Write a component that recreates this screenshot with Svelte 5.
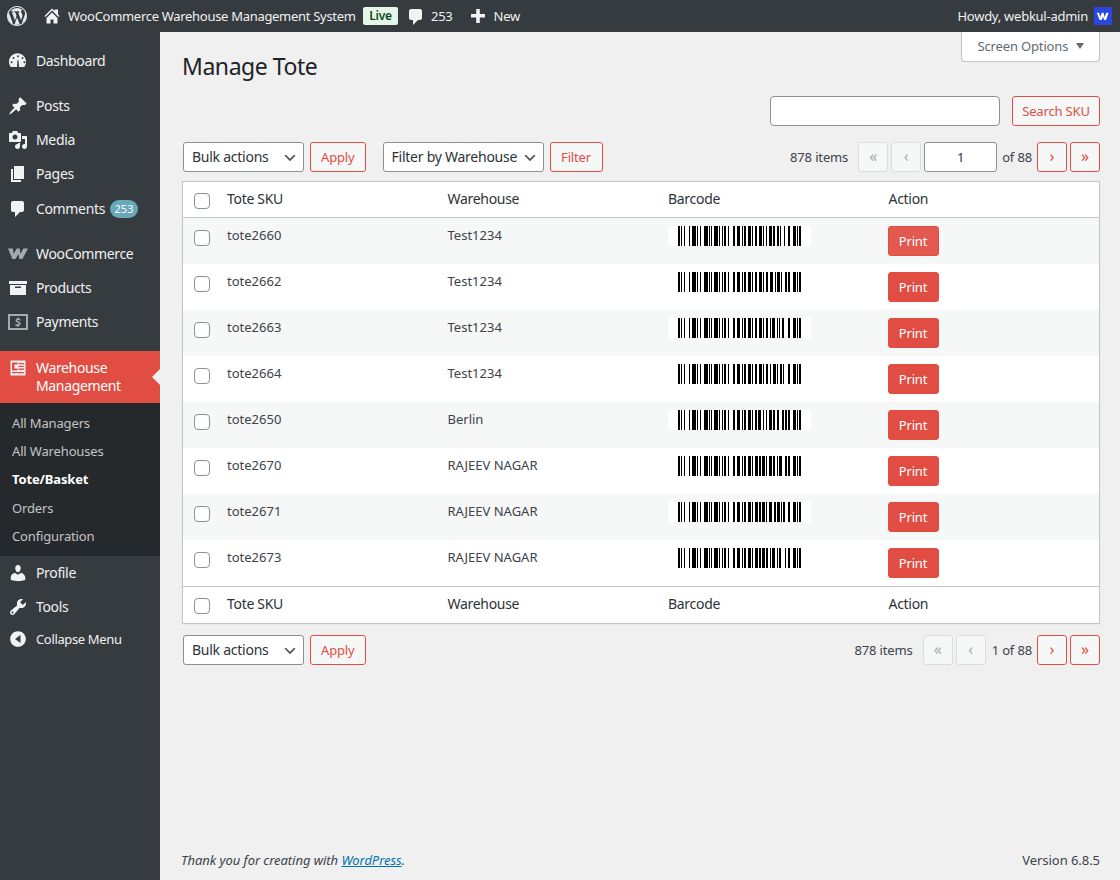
<script lang="ts">
	const codes = '212222 222122 222221 121223 121322 131222 122213 122312 132212 221213 221312 231212 112232 122132 122231 113222 123122 123221 223211 221132 221231 213212 223112 312131 311222 321122 321221 312212 322112 322211 212123 212321 232121 111323 131123 131321 112313 132113 132311 211313 231113 231311 112133 112331 132131 113123 113321 133121 313121 211331 231131 213113 213311 213131 311123 311321 331121 312113 312311 332111 314111 221411 431111 111224 111422 121124 121421 141122 141221 112214 112412 122114 122411 142112 142211 241211 221114 413111 241112 134111 111242 121142 121241 114212 124112 124211 411212 421112 421211 212141 214121 412121 111143 111341 131141 114113 114311 411113 411311 113141 114131 311141 411131 211412 211214 211232 2331112'.split(' ');

	// code128 set B, one module per pixel
	function bars(sku: string) {
		const vals = [...sku].map((c) => c.charCodeAt(0) - 32);
		const check = vals.reduce((sum, v, i) => sum + v * (i + 1), 104) % 103;
		const widths = [104, ...vals, check, 106].map((v) => codes[v]).join('');
		const out: { x: number; w: number }[] = [];
		let x = 10;
		[...widths].forEach((ch, i) => {
			const w = Number(ch);
			if (i % 2 === 0) out.push({ x, w });
			x += w;
		});
		return out;
	}

	const rows = [
		{ sku: 'tote2660', warehouse: 'Test1234' },
		{ sku: 'tote2662', warehouse: 'Test1234' },
		{ sku: 'tote2663', warehouse: 'Test1234' },
		{ sku: 'tote2664', warehouse: 'Test1234' },
		{ sku: 'tote2650', warehouse: 'Berlin' },
		{ sku: 'tote2670', warehouse: 'RAJEEV NAGAR' },
		{ sku: 'tote2671', warehouse: 'RAJEEV NAGAR' },
		{ sku: 'tote2673', warehouse: 'RAJEEV NAGAR' }
	];

	const icons: Record<string, string> = {
		dashboard: 'M3.76 16h12.48c1.1-1.43 1.76-3.21 1.76-5.14 0-4.7-3.81-8.51-8.5-8.51-4.7 0-8.5 3.81-8.5 8.51 0 1.93.66 3.71 1.76 5.14zM10 4.2a1 1 0 1 1 0 2 1 1 0 0 1 0-2zM5.5 6a1 1 0 1 1 0 2 1 1 0 0 1 0-2zM14.5 6a1 1 0 1 1 0 2 1 1 0 0 1 0-2zM3.6 10.2a1 1 0 1 1 0 2 1 1 0 0 1 0-2zM16.4 10.2a1 1 0 1 1 0 2 1 1 0 0 1 0-2zM9 15l.6-6h.8l.6 6c.3.9-.4 1-1 1s-1.300-.1-1-1z',
		pin: 'M10.44 3.02l1.82-1.82 6.36 6.35-1.83 1.82c-1.05-.68-2.48-.57-3.41.36l-.75.75c-.92.93-1.04 2.35-.35 3.41l-1.83 1.82-2.41-2.41-2.8 2.79c-.42.42-3.38 2.71-3.8 2.29s1.86-3.39 2.28-3.81l2.79-2.79L4.1 9.36l1.83-1.82c1.05.69 2.48.57 3.4-.36l.75-.75c.93-.92 1.05-2.35.36-3.41z',
		media: 'M13 11V4c0-.55-.45-1-1-1h-1.67L9 1H5L3.67 3H2c-.55 0-1 .45-1 1v7c0 .55.45 1 1 1h10c.55 0 1-.45 1-1zM7 4.5c1.38 0 2.5 1.12 2.5 2.5S8.38 9.500 7 9.500 4.500 8.380 4.500 7 5.620 4.500 7 4.500zM14 6h5v10.500c0 1.380-1.120 2.500-2.500 2.500S14 17.880 14 16.500s1.120-2.500 2.500-2.500c.17 0 .34.020.5.050V9h-3V6zm-4 8.050V13h2v3.500c0 1.380-1.120 2.500-2.500 2.500S7 17.880 7 16.500 8.120 14 9.500 14c.17 0 .34.020.5.050z',
		page: 'M6 15V2h10v13H6zm-1 1h8v2H3V5h2v11z',
		comment: 'M5 2h9c1.100 0 2 .9 2 2v7c0 1.100-.9 2-2 2h-2l-5 5v-5H5c-1.100 0-2-.9-2-2V4c0-1.100.9-2 2-2z',
		archive: 'M19 3v3H1V3h18zM2 7h16v10H2V7zm11 3V8.500H7V10h6z',
		users: 'M10 9.250c-2.270 0-2.730-3.440-2.730-3.440C7 4.020 7.820 2 9.970 2c2.160 0 2.980 2.020 2.710 3.810 0 0-.41 3.440-2.680 3.440zm0 2.570L12.720 10c2.390 0 4.520 2.330 4.520 4.530v2.490s-3.650 1.130-7.240 1.130c-3.650 0-7.240-1.130-7.240-1.130v-2.490c0-2.250 1.940-4.480 4.440-4.480z',
		tools: 'M16.680 9.770c-1.340 1.340-3.300 1.670-4.950.99l-5.410 6.520c-.99.990-2.590.990-3.570 0-.99-.980-.99-2.580 0-3.570l6.520-5.420c-.68-1.650-.35-3.610.99-4.950 1.280-1.280 3.120-1.620 4.720-1.060l-2.890 2.890 2.820 2.820 2.860-2.870c.53 1.580.18 3.390-1.090 4.650zM3.810 16.210c.4.390 1.040.390 1.430 0 .4-.4.400-1.040 0-1.440-.39-.39-1.030-.39-1.430 0-.39.400-.39 1.040 0 1.440z',
		collapse: 'M10 2.160c4.330 0 7.840 3.510 7.840 7.840s-3.510 7.840-7.840 7.840S2.160 14.330 2.160 10 5.670 2.160 10 2.160zM12.500 14V6L7 10z',
		warehouse: 'M2.500 2.500h15v15h-15v-15zM4 4.500v8h5.500v-2H6.500V6.500H9.500v-2H4zM10.500 5v1.300H16V5h-5.500zM10.500 7.800v1.300H16V7.800h-5.500zM10.500 10.600v1.300H16v-1.300h-5.500zM4 14v1.200h12V14H4z',
		payments: 'M0 2h20v16H0V2zm2 2v12h16V4H2zM9.300 5.500h1.400v1.100c.8.100 1.500.300 2 .6l-.4 1.500c-.6-.3-1.300-.6-2.100-.6-.7 0-1 .3-1 .6 0 .4.400.6 1.300.9 1.400.4 2.100 1.100 2.100 2.100 0 1-.7 1.900-1.900 2.100v1.100H9.300v-1c-.8-.1-1.600-.3-2.100-.6l.4-1.600c.6.300 1.400.6 2.200.6.700 0 1.100-.3 1.100-.7s-.3-.6-1.200-.9c-1.300-.4-2.200-1.100-2.200-2.200 0-1 .7-1.800 1.800-2z',
		woo: 'M0 4.500h4.800l.7 5.500 3.200-5.500h3.100l.6 5.500 2.900-5.500H20l-5.600 10.500h-3l-.9-5-3 5H4.400z'
	};

	const top1 = [
		{ icon: 'pin', label: 'Posts' },
		{ icon: 'media', label: 'Media' },
		{ icon: 'page', label: 'Pages' }
	];
	const sub = ['All Managers', 'All Warehouses', 'Tote/Basket', 'Orders', 'Configuration'];
</script>

{#snippet ico(name: string, cls = '')}
	<svg class="ico {cls}" viewBox="0 0 20 20"><path fill-rule="evenodd" d={icons[name]} /></svg>
{/snippet}

{#snippet select(label: string, cls: string)}
	<select class="sel {cls}"><option>{label}</option></select>
{/snippet}

<header class="adminbar">
	<div class="bar-left">
		<svg class="wp" viewBox="0 0 20 20"><path fill-rule="evenodd" d="M20 10c0-5.520-4.480-10-10-10S0 4.480 0 10s4.480 10 10 10 10-4.480 10-10zM10 1.010c4.960 0 8.990 4.030 8.990 8.990s-4.030 8.990-8.990 8.990S1.010 14.960 1.010 10 5.040 1.010 10 1.010zM8.010 14.820L4.850 6.340c.51-.03 1.090-.09 1.090-.09.46-.05.41-1.050-.05-1.030 0 0-1.310.1-2.150.1-.15 0-.33 0-.52-.01C5.640 3.060 7.680 2.030 10 2.030c2.120 0 4.050.81 5.500 2.130-.61-.1-1.480.35-1.480 1.430 0 .67.410 1.230.81 1.900.32.560.51 1.260.51 2.280 0 1.380-1.300 4.640-1.300 4.640l-2.810-7.770c.5-.03.76-.16.76-.16.46-.05.41-1.160-.05-1.130 0 0-1.340.11-2.210.11-.8 0-2.160-.11-2.160-.11-.46-.03-.52 1.110-.06 1.130l.85.08 1.170 3.170zM17.410 10c.24-.64.74-1.870.43-4.250.7 1.290 1.100 2.760 1.100 4.330 0 3.330-1.750 6.240-4.360 7.860.92-2.640 1.830-5.290 2.830-7.940zM6.100 18.090C3.080 16.630 1 13.540 1 10c0-1.300.28-2.530.78-3.640zM10.090 11.200l2.620 7.160c-.86.32-1.810.5-2.790.5-.84 0-1.640-.13-2.400-.36z" /></svg>
		<svg class="home" viewBox="0 0 20 20"><path d="M16 8.500l1.530 1.530-1.060 1.060L10 4.620l-6.470 6.470-1.060-1.060L10 2.500l2.500 2.500V3.500H16v5zM10 6.500l5.500 5.500v5.500h-4v-4h-3v4h-4V12z" /></svg>
		<span class="site">WooCommerce Warehouse Management System</span>
		<span class="live">Live</span>
		<svg class="bubble" viewBox="0 0 20 20"><path d={icons.comment} /></svg>
		<span class="count">253</span>
		<svg class="plus" viewBox="0 0 20 20"><path d="M17 8v3.500h-5.200V17H8.200v-5.500H3V8h5.200V3h3.600v5z" /></svg>
		<span>New</span>
	</div>
	<div class="bar-right">
		<span>Howdy, webkul-admin</span>
		<svg class="avatar" viewBox="0 0 16 16"><rect width="16" height="16" fill="#2a45e0" /><path d="M2.500 5h2l1 4 1.400-4h1.600l1 4 1.300-4h2.200l-2.300 6.500H9l-1-3-1.100 3H5z" fill="#fff" /></svg>
	</div>
</header>

<div class="layout">
	<nav class="side">
		<a class="item first">{@render ico('dashboard')}<span>Dashboard</span></a>
		<div class="sep"></div>
		{#each top1 as it}
			<a class="item">{@render ico(it.icon)}<span>{it.label}</span></a>
		{/each}
		<a class="item comments">{@render ico('comment')}<span>Comments</span><b class="pill">253</b></a>
		<div class="sep"></div>
		<a class="item">{@render ico('woo', 'dim')}<span>WooCommerce</span></a>
		<a class="item">{@render ico('archive')}<span>Products</span></a>
		<a class="item">{@render ico('payments', 'dim')}<span>Payments</span></a>
		<div class="sep last"></div>
		<a class="item active">{@render ico('warehouse')}<span>Warehouse Management</span></a>
		<ul class="submenu">
			{#each sub as s}
				<li class:on={s === 'Tote/Basket'}>{s}</li>
			{/each}
		</ul>
		<a class="item">{@render ico('users')}<span>Profile</span></a>
		<a class="item">{@render ico('tools')}<span>Tools</span></a>
		<a class="item collapse">{@render ico('collapse')}<span>Collapse Menu</span></a>
	</nav>

	<div class="main">
		<div class="content">
			<button class="screen-opts">Screen Options <i class="tri"></i></button>
			<h1>Manage Tote</h1>

			<div class="search">
				<input type="text" class="search-input" />
				<button class="btn search-btn">Search SKU</button>
			</div>

			<div class="tablenav top">
				{@render select('Bulk actions', 'bulk')}
				<button class="btn">Apply</button>
				{@render select('Filter by Warehouse', 'wh')}
				<button class="btn filter-btn">Filter</button>
				<div class="pages">
					<span class="num">878 items</span>
					<span class="pg off">«</span>
					<span class="pg off">‹</span>
					<input class="cur" type="text" value="1" />
					<span class="of">of 88</span>
					<span class="pg">›</span>
					<span class="pg">»</span>
				</div>
			</div>

			<table>
				<thead>
					<tr>
						<th class="chk"><input type="checkbox" /></th>
						<th>Tote SKU</th>
						<th>Warehouse</th>
						<th>Barcode</th>
						<th>Action</th>
					</tr>
				</thead>
				<tbody>
					{#each rows as r, i}
						<tr>
							<td class="chk"><input type="checkbox" /></td>
							<td>{r.sku}</td>
							<td>{r.warehouse}</td>
							<td>
								<svg class="barcode" width="143" height="20" viewBox="0 0 143 20" shape-rendering="crispEdges">
									<rect width="143" height="20" fill="#fff" />
									{#each bars(r.sku) as b}
										<rect x={b.x} width={b.w} height="20" fill="#000" />
									{/each}
								</svg>
							</td>
							<td><button class="print" class:hover={i === 0}>Print</button></td>
						</tr>
					{/each}
				</tbody>
				<tfoot>
					<tr>
						<th class="chk"><input type="checkbox" /></th>
						<th>Tote SKU</th>
						<th>Warehouse</th>
						<th>Barcode</th>
						<th>Action</th>
					</tr>
				</tfoot>
			</table>

			<div class="tablenav bottom">
				{@render select('Bulk actions', 'bulk')}
				<button class="btn">Apply</button>
				<div class="pages">
					<span class="num">878 items</span>
					<span class="pg off">«</span>
					<span class="pg off">‹</span>
					<span class="of wide">1 of 88</span>
					<span class="pg">›</span>
					<span class="pg">»</span>
				</div>
			</div>
		</div>

		<footer>
			<em>Thank you for creating with <a href="#wp">WordPress</a>.</em>
			<span>Version 6.8.5</span>
		</footer>
	</div>
</div>

<style>
	:global(body) {
		background: #f0f0f1;
		color: #3c434a;
		font-family: 'Noto Sans', 'Open Sans', sans-serif;
		font-size: 13px;
		line-height: 1.4;
		letter-spacing: -0.15px;
	}
	.adminbar {
		height: 32px;
		background: #363b3f;
		color: #f0f0f1;
		display: flex;
		justify-content: space-between;
		align-items: center;
		padding: 0 8px 0 7px;
		letter-spacing: -0.25px;
	}
	.bar-left, .bar-right { display: flex; align-items: center; }
	.wp { width: 20px; height: 20px; fill: #e8eaeb; margin-right: 15px; }
	.home { width: 20px; height: 20px; fill: #f1f2f3; margin-right: 6px; }
	.site { width: 287px; white-space: nowrap; letter-spacing: -0.3px; }
	.live {
		background: #e8f5e9;
		color: #0a4b1e;
		font-size: 12px;
		font-weight: 600;
		margin-left: 8px;
		width: 35px;
		height: 18px;
		line-height: 18px;
		text-align: center;
		border-radius: 2px;
	}
	.bubble { width: 20px; height: 20px; fill: #f1f2f3; margin: 2px 0 0 8px; }
	.count { margin-left: 5px; }
	.plus { width: 20px; height: 20px; fill: #f1f2f3; margin: 0 6px 0 15px; }
	.bar-right { gap: 6px; }
	.avatar { width: 18px; height: 18px; }

	.layout { display: flex; min-height: 848px; }
	.side { width: 160px; flex: none; background: #363b3f; color: #f0f0f1; padding-top: 12px; }
	.item {
		display: flex;
		align-items: center;
		position: relative;
		min-height: 34px;
		font-size: 14px;
		line-height: 18px;
		letter-spacing: -0.35px;
	}
	.ico { width: 20px; height: 20px; flex: none; fill: #f1f2f3; margin: 0 8px; }
	.ico.dim { fill: #a7aaad; }
	.comments { margin-top: 1px; }
	.sep { height: 11px; }
	.sep.last { height: 12px; }
	.pill {
		background: #69a8bb;
		color: #fff;
		font-size: 11px;
		font-weight: 400;
		letter-spacing: 0;
		margin-left: 5px;
		width: 28px;
		text-align: center;
		height: 18px;
		line-height: 18px;
		border-radius: 9px;
	}
	.active { background: #e14d43; color: #fff; padding: 8px 0; align-items: flex-start; }
	.active::after {
		content: '';
		position: absolute;
		right: 0;
		top: 18px;
		border: 8px solid transparent;
		border-right-color: #f0f0f1;
		border-left-width: 0;
	}
	.active .ico { margin-top: -1px; }
	.submenu {
		list-style: none;
		margin: 0;
		padding: 6px 0;
		background: #26292c;
		color: #c3c4c7;
	}
	.submenu li { padding: 5px 12px; height: 18.2px; line-height: 18.2px; }
	.submenu .on { color: #fff; font-weight: 700; }
	.collapse { font-size: 13px; min-height: 32px; margin-top: -1px; }

	.main { flex: 1; display: flex; flex-direction: column; min-width: 0; }
	.content { flex: 1; padding: 0 20px 0 22px; }
	.screen-opts {
		float: right;
		width: 139px;
		height: 30px;
		background: #fff;
		border: 1px solid #c3c4c7;
		border-top: none;
		border-radius: 0 0 4px 4px;
		color: #646970;
		font: inherit;
		letter-spacing: inherit;
		padding: 0;
	}
	.tri {
		display: inline-block;
		margin-left: 4px;
		border: 4.5px solid transparent;
		border-top: 6px solid #646970;
		border-bottom: 0;
		vertical-align: 2px;
	}
	h1 {
		margin: 0;
		padding: 19px 0 4px;
		font-size: 23px;
		font-weight: 400;
		line-height: 30px;
		letter-spacing: -0.45px;
		color: #1d2327;
	}
	.search { clear: both; display: flex; justify-content: flex-end; gap: 12px; margin-top: 11px; }
	.search-input {
		width: 230px;
		height: 30px;
		box-sizing: border-box;
		border: 1px solid #8c8f94;
		border-radius: 4px;
		background: #fff;
	}
	.btn {
		height: 30px;
		box-sizing: border-box;
		padding: 0 10px;
		background: #f6f7f7;
		border: 1px solid #e14d43;
		border-radius: 3px;
		color: #e14d43;
		font: inherit;
		letter-spacing: inherit;
	}
	.search-btn { width: 88px; padding: 0; }
	.filter-btn { width: 53px; padding: 0; }
	.tablenav { display: flex; align-items: center; gap: 6px; height: 30px; }
	.tablenav.top { margin-top: 16px; margin-bottom: 9px; padding-left: 1px; }
	.tablenav.bottom { margin-top: 11px; padding-left: 1px; }
	.sel {
		appearance: none;
		height: 30px;
		box-sizing: border-box;
		border: 1px solid #8c8f94;
		border-radius: 3px;
		padding: 0 24px 0 8px;
		background: #fff url("data:image/svg+xml,%3Csvg xmlns='http://www.w3.org/2000/svg' width='20' height='20'%3E%3Cpath d='M5 6l5 5 5-5 2 1-7 7-7-7z' fill='%23555'/%3E%3C/svg%3E") no-repeat right 5px top 55%;
		background-size: 16px 16px;
		color: #2c3338;
		font: inherit;
		font-size: 14px;
		letter-spacing: -0.25px;
	}
	.bulk { width: 121px; }
	.wh { width: 161px; margin-left: 11px; }
	.pages { margin-left: auto; display: flex; align-items: center; gap: 3px; }
	.num { margin-right: 7px; }
	.pg {
		width: 30px;
		height: 30px;
		box-sizing: border-box;
		border: 1px solid #e14d43;
		border-radius: 3px;
		background: #f6f7f7;
		color: #e14d43;
		font-size: 16px;
		line-height: 26px;
		text-align: center;
	}
	.pg.off { border-color: #dcdcde; color: #a7aaad; }
	.cur {
		width: 73px;
		height: 30px;
		box-sizing: border-box;
		border: 1px solid #8c8f94;
		border-radius: 3px;
		text-align: center;
		font: inherit;
		font-size: 13px;
		color: #2c3338;
	}
	.of { margin: 0 2px; }
	.of.wide { margin: 0 2px 0 3px; }

	table {
		width: 100%;
		table-layout: fixed;
		border-collapse: separate;
		border-spacing: 0;
		background: #fff;
		border: 1px solid #c3c4c7;
		box-shadow: 0 1px 1px rgba(0, 0, 0, 0.04);
	}
	th, td { padding: 8px 10px; text-align: left; vertical-align: top; }
	th { font-size: 14px; font-weight: 400; line-height: 19px; letter-spacing: -0.3px; color: #2c3338; }
	thead th { border-bottom: 1px solid #c3c4c7; padding: 7px 10px 9px; }
	tfoot th { border-top: 1px solid #c3c4c7; padding: 7px 10px 10px; }
	td { line-height: 19.5px; height: 30px; letter-spacing: 0; }
	tbody tr:nth-child(odd) { background: #f6f7f7; }
	th.chk, td.chk { width: 34px; box-sizing: border-box; padding: 0 0 0 3px; vertical-align: top; }
	th.chk { padding-top: 11px; }
	td.chk { padding-top: 12px; }
	input[type='checkbox'] {
		appearance: none;
		display: block;
		width: 16px;
		height: 16px;
		margin: 0 0 0 8px;
		background: #fff;
		border: 1px solid #8c8f94;
		border-radius: 4px;
	}
	.barcode { display: block; }
	.print {
		display: block;
		width: 51px;
		height: 30px;
		margin-left: -1px;
		padding: 1px 0 0;
		background: #e14d43;
		border: 1px solid #e14d43;
		border-radius: 3px;
		color: #fff;
		font: inherit;
		letter-spacing: -0.15px;
	}
	.print.hover { background: #e35950; }
	footer {
		display: flex;
		justify-content: space-between;
		padding: 9px 20px 11px 21px;
		line-height: 18px;
		letter-spacing: -0.05px;
	}
	footer a { color: #0073aa; }
</style>
